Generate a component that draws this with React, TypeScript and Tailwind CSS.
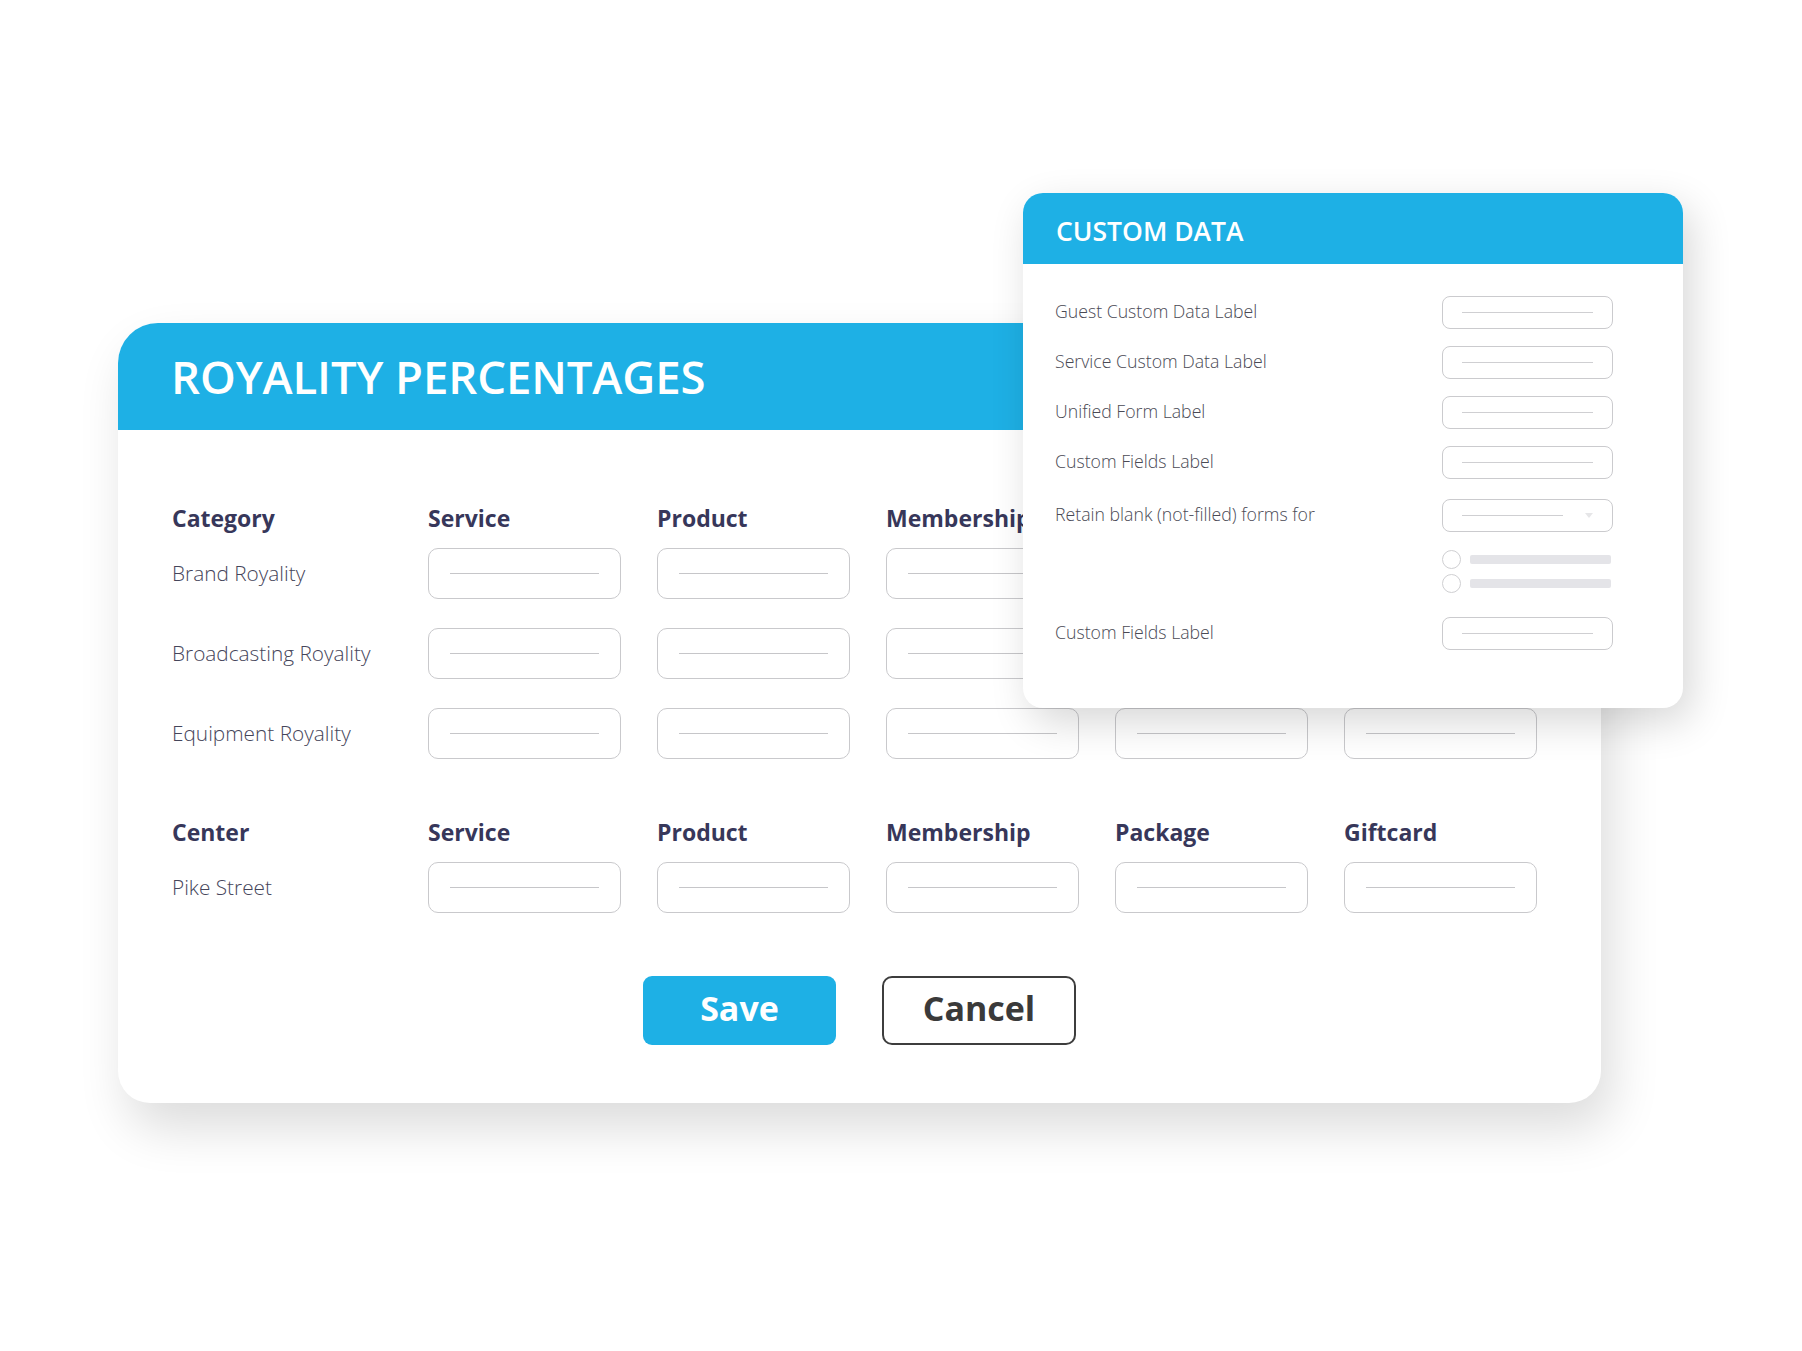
import React from "react";

const font = { fontFamily: '"Open Sans", "Noto Sans", Arial, sans-serif' };

const cols = ["Service", "Product", "Membership", "Package", "Giftcard"];
const categories = ["Brand Royality", "Broadcasting Royality", "Equipment Royality"];

// empty field with a grey placeholder line
function Field() {
  return (
    <div className="h-[51px] w-[193px] rounded-[10px] border-[1.5px] border-[#c9c9cc] bg-white flex items-center px-[21px]">
      <div className="h-[1.5px] w-full bg-[#c6c6c9]" />
    </div>
  );
}

function SmallField({ select }: { select?: boolean }) {
  return (
    <div className="h-[33px] w-[171px] rounded-[8px] border-[1.5px] border-[#cbcbce] bg-white flex items-center pl-[19px] pr-[19px]">
      {select ? (
        <>
          <div className="h-[1.5px] w-[101px] bg-[#cfcfd2]" />
          <div className="ml-auto h-0 w-0 border-x-[4px] border-t-[5px] border-x-transparent border-t-[#e6e6e8]" />
        </>
      ) : (
        <div className="h-[1.5px] w-full bg-[#cfcfd2]" />
      )}
    </div>
  );
}

function Radio() {
  return (
    <div className="flex items-center gap-[9px]">
      <div className="h-[19px] w-[19px] rounded-full border-[1.5px] border-[#cfcfd2]" />
      <div className="h-[9px] w-[141px] rounded-[2px] bg-[#e4e4e8]" />
    </div>
  );
}

function HeaderRow({ first }: { first: string }) {
  return (
    <div className="grid grid-cols-[220px_repeat(5,193px)] gap-x-[36px] items-center h-[32px] pb-[7px]">
      <div className="text-[23px] font-bold text-[#37375a]">{first}</div>
      {cols.map((c) => (
        <div key={c} className="text-[23px] font-bold text-[#37375a]">{c}</div>
      ))}
    </div>
  );
}

function RoyaltyCard() {
  return (
    <div className="ml-[118px] w-[1483px] rounded-tl-[40px] rounded-tr-[40px] rounded-b-[32px] bg-white overflow-hidden shadow-[10px_25px_50px_rgba(0,0,0,0.14)]">
      <div className="h-[107px] bg-[#1eb0e5] flex items-center pl-[53px]">
        <h1 className="text-[45.5px] font-semibold leading-none text-white tracking-[-0.1px]">ROYALITY PERCENTAGES</h1>
      </div>

      <div className="pt-[71px] pl-[54px] pb-[58px]">
        {/* categories */}
        <HeaderRow first="Category" />
        <div className="mt-[15px] flex flex-col gap-[29px]">
          {categories.map((name) => (
            <div key={name} className="grid grid-cols-[220px_repeat(5,193px)] gap-x-[36px] items-center">
              <div className="text-[20.8px] font-light text-[#45455a]">{name}</div>
              {cols.map((c) => (
                <Field key={c} />
              ))}
            </div>
          ))}
        </div>

        {/* centers */}
        <div className="mt-[56px]">
          <HeaderRow first="Center" />
        </div>
        <div className="mt-[15px] grid grid-cols-[220px_repeat(5,193px)] gap-x-[36px] items-center">
          <div className="text-[20.8px] font-light text-[#45455a]">Pike Street</div>
          {cols.map((c) => (
            <Field key={c} />
          ))}
        </div>

        <div className="mt-[63px] flex justify-center gap-[46px] pr-[54px]">
          <button className="h-[69px] w-[193px] rounded-[9px] bg-[#1eb0e5] pb-[6px] text-[34px] font-bold text-white leading-none">Save</button>
          <button className="h-[69px] w-[194px] rounded-[10px] border-2 border-[#3d3d3d] bg-white pb-[6px] text-[34px] font-bold text-[#3a3a3a] leading-none">Cancel</button>
        </div>
      </div>
    </div>
  );
}

function CustomDataCard() {
  const rows = ["Guest Custom Data Label", "Service Custom Data Label", "Unified Form Label", "Custom Fields Label"];
  const label = "text-[17.7px] font-light text-[#4a4a55] pb-[3px]";
  return (
    <div className="absolute left-[1023px] top-[193px] w-[660px] h-[515px] rounded-[20px] bg-white overflow-hidden shadow-[8px_14px_40px_rgba(0,0,0,0.16)]">
      <div className="h-[71px] bg-[#1eb0e5] flex items-center pl-[33px] pt-[6px]">
        <h2 className="text-[26.5px] font-semibold leading-none text-white">CUSTOM DATA</h2>
      </div>
      <div className="pl-[32px] pt-[32px]">
        <div className="flex flex-col gap-[17px]">
          {rows.map((r) => (
            <div key={r} className="grid grid-cols-[387px_171px] items-center">
              <div className={label}>{r}</div>
              <SmallField />
            </div>
          ))}
        </div>
        <div className="mt-[20px] grid grid-cols-[387px_171px] items-center">
          <div className={label}>Retain blank (not-filled) forms for</div>
          <SmallField select />
        </div>
        <div className="mt-[18px] ml-[387px] flex flex-col gap-[5px]">
          <Radio />
          <Radio />
        </div>
        <div className="mt-[24px] grid grid-cols-[387px_171px] items-center">
          <div className={label}>Custom Fields Label</div>
          <SmallField />
        </div>
      </div>
    </div>
  );
}

export default function App() {
  return (
    <div className="relative w-[1802px] h-[1351px] bg-white overflow-hidden" style={font}>
      <div className="pt-[323px]">
        <RoyaltyCard />
      </div>
      <CustomDataCard />
    </div>
  );
}
